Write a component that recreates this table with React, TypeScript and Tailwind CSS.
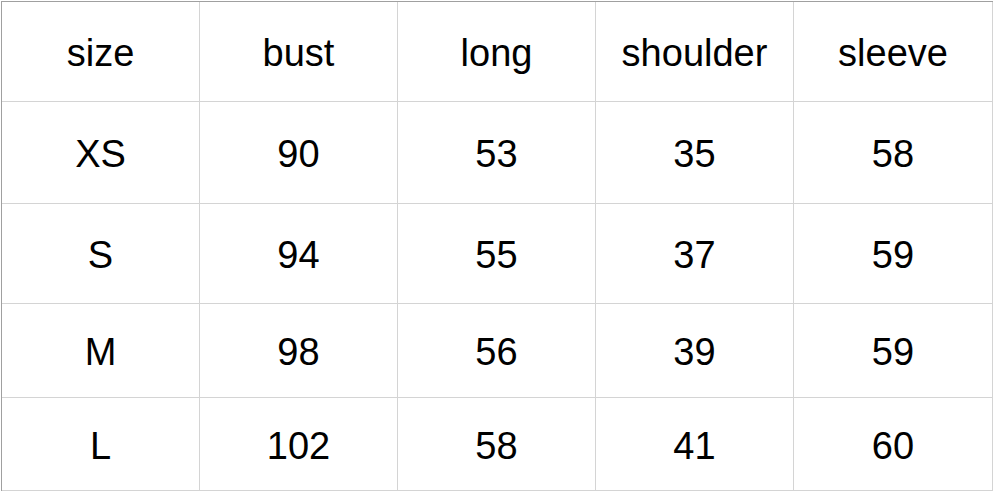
import React from "react";

const rows: string[][] = [
  ["size", "bust", "long", "shoulder", "sleeve"],
  ["XS", "90", "53", "35", "58"],
  ["S", "94", "55", "37", "59"],
  ["M", "98", "56", "39", "59"],
  ["L", "102", "58", "41", "60"],
];

const heights = ["h-[100px]", "h-[102px]", "h-[100px]", "h-[94px]", "h-[93px]"];
const widths = ["w-[198px]", "w-[198px]", "w-[198px]", "w-[198px]", "w-[199px]"];

export default function App() {
  return (
    <div className="w-[996px] h-[494px] bg-white overflow-hidden pl-[1px] pt-[1px]">
      <div
        className="inline-flex flex-col border-l border-t border-[#a0a0a0] text-black text-[38px]"
        style={{ fontFamily: '"Liberation Sans", Arial, sans-serif' }}
      >
        {rows.map((r, i) => (
          <div key={i} className={`flex ${heights[i]}`}>
            {r.map((c, j) => (
              <div
                key={j}
                className={`${widths[j]} h-full flex items-center justify-center border-r border-b border-[#d4d4d4] leading-none pt-[3px]`}
              >
                {c}
              </div>
            ))}
          </div>
        ))}
      </div>
    </div>
  );
}
